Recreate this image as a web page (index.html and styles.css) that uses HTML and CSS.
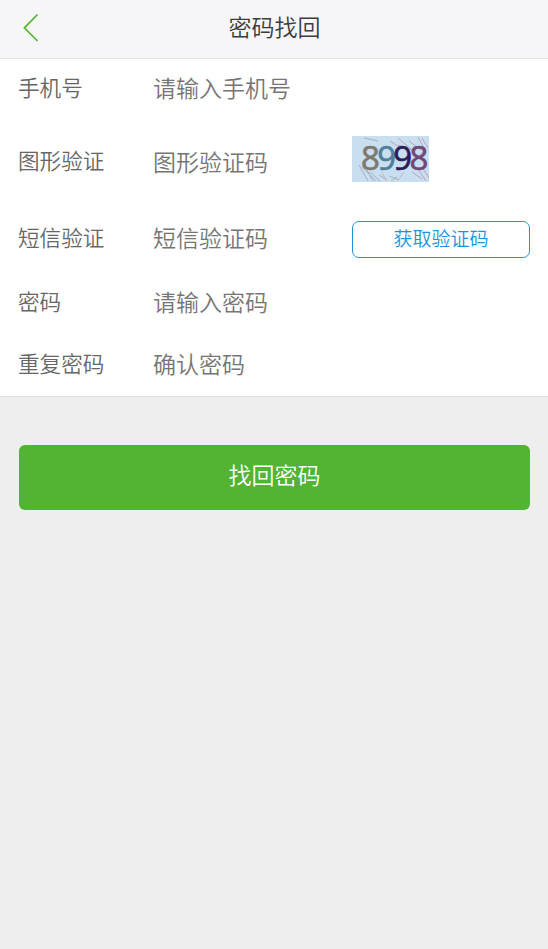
FILE: index.html
```html
<!DOCTYPE html>
<html lang="zh-CN">
<head>
<meta charset="utf-8">
<title>密码找回</title>
<link rel="stylesheet" href="styles.css">
</head>
<body>
<header class="bar">
  <a class="back" href="#"><svg width="16" height="30" viewBox="0 0 16 30"><path d="M14.5 1.5 1.4 14.8 14.5 28"/></svg></a>
  <h1 class="title">密码找回</h1>
</header>
<form class="form">
  <div class="row phone"><label class="label">手机号</label><input class="field" type="text" placeholder="请输入手机号"></div>
  <div class="row captcha"><label class="label">图形验证</label><input class="field" type="text" placeholder="图形验证码">
    <svg class="code" width="77" height="46" viewBox="0 0 77 46">
      <rect width="77" height="46" fill="#c8dff2"/>
      <g class="scratches">
        <path stroke="#a3a7b8" d="M12 2l14 3M7 29l9 16M10 31l14 14M15 34l6 11M18 36l10 9M37 40l10 4M39 45l6-4M27 39l8 5"/>
        <path stroke="#b99bb2" d="M38 5l12 8M46 2l13 11M57 5l12 9M66 1l7 13M70 2l6 10M46 9l14 5M66 33l8 12M70 31l7 11M60 36l10 7"/>
        <path stroke="#c2b2b8" d="M72 15l-9 8M52 36l-6 8M30 36l4 9"/>
      </g>
      <text class="digits" x="9" y="34"><tspan fill="#7d796b" stroke="#7d796b">8</tspan><tspan fill="#527f98" stroke="#527f98">9</tspan><tspan fill="#2d1b59" stroke="#2d1b59">9</tspan><tspan fill="#704775" stroke="#704775">8</tspan></text>
    </svg>
  </div>
  <div class="row sms"><label class="label">短信验证</label><input class="field" type="text" placeholder="短信验证码"><button class="send" type="button">获取验证码</button></div>
  <div class="row"><label class="label">密码</label><input class="field" type="password" placeholder="请输入密码"></div>
  <div class="row repeat"><label class="label">重复密码</label><input class="field" type="password" placeholder="确认密码"></div>
</form>
<button class="submit" type="button">找回密码</button>
</body>
</html>
```
FILE: styles.css
```css
* { box-sizing: border-box; }
body {
  margin: 0;
  min-height: 949px;
  background: #eee;
  font-family: "Noto Sans CJK SC", sans-serif;
  font-weight: 350;
}
.bar {
  display: grid;
  grid-template-columns: 61px 1fr 60px;
  height: 59px;
  background: #f6f6f8;
  border-bottom: 1px solid #e2e3e5;
}
.back { padding: 13px 0 0 23px; }
.back svg { display: block; fill: none; stroke: #55b332; stroke-width: 1.7; }
.title {
  margin: 0;
  font-size: 23px;
  font-weight: 350;
  line-height: 52px;
  text-align: center;
  color: #3c3c3c;
}
.form { background: #fff; border-bottom: 1px solid #ddd; }
.row {
  display: grid;
  grid-template-columns: 135px 199px 178px;
  align-items: center;
  height: 62px;
  padding-left: 18px;
}
.phone { height: 58px; }
.captcha { height: 90px; }
.sms { height: 64px; }
.repeat { height: 63px; }
.label { padding-bottom: 3px; font-size: 21.6px; line-height: 32px; color: #666; }
.field {
  width: 100%;
  height: 36px;
  padding: 0 0 3px;
  border: 0;
  outline: 0;
  background: none;
  font: inherit;
  font-size: 23px;
}
.captcha .label { padding-bottom: 5px; }
.sms .label { padding-bottom: 5px; }
.sms .field { padding-bottom: 4px; }
.field::placeholder { color: #757575; opacity: 1; }
.code { display: block; margin-top: -6px; }
.scratches { fill: none; stroke-width: .9; }
.digits { font: 33px "Open Sans", sans-serif; letter-spacing: -2.7px; stroke-width: .7; }
.send {
  height: 37px;
  margin-top: 1px;
  padding: 0 0 3px;
  border: 1px solid #2193dc;
  border-radius: 7px;
  background: #fff;
  color: #1a94e0;
  font: inherit;
  font-size: 19px;
  line-height: 32px;
}
.submit {
  display: block;
  width: 511px;
  height: 65px;
  margin: 48px 0 0 19px;
  padding: 0 0 7px;
  border: 0;
  border-radius: 6px;
  background: #53b332;
  color: #fff;
  font: inherit;
  font-size: 23px;
}
```
